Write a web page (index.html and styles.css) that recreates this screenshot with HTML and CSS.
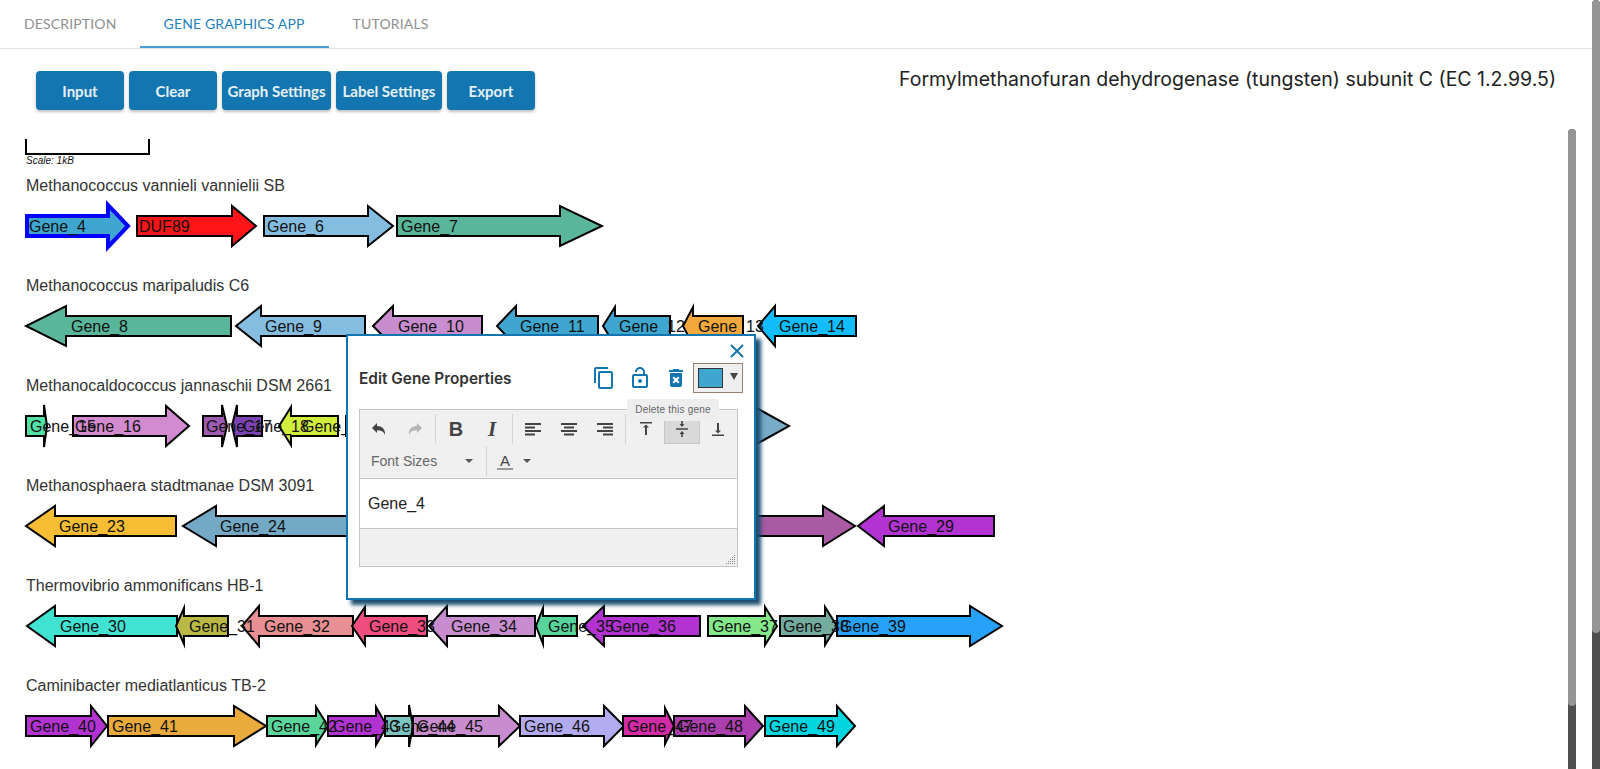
FILE: index.html
```html
<!DOCTYPE html>
<html lang="en">
<head>
<meta charset="utf-8">
<title>Gene Graphics</title>
<link rel="stylesheet" href="styles.css">
</head>
<body>
<nav class="tabs">
  <a class="tab">DESCRIPTION</a>
  <a class="tab tab-active">GENE GRAPHICS APP</a>
  <a class="tab">TUTORIALS</a>
</nav>
<main class="app">
  <div class="toolbar">
    <div class="buttons">
      <button class="btn btn-input">Input</button>
      <button class="btn btn-clear">Clear</button>
      <button class="btn btn-graph">Graph Settings</button>
      <button class="btn btn-label">Label Settings</button>
      <button class="btn btn-export">Export</button>
    </div>
    <h1 class="title">Formylmethanofuran dehydrogenase (tungsten) subunit C (EC 1.2.99.5)</h1>
  </div>
  <svg class="scale" width="200" height="35">
    <path class="scale-line" d="M26 0V15H149V0"/>
    <text class="scale-text" x="26" y="25">Scale: 1kB</text>
  </svg>

  <section class="track">
    <div class="track-label">Methanococcus vannieli vannielii SB</div>
    <svg class="genes" width="1100" height="60">
      <polygon class="gene gene-selected" fill="#3fa7cf" points="27,20 108,20 108,9 128,30 108,51 108,40 27,40"/>
      <polygon class="gene" fill="#ff1418" points="137,20 232,20 232,10 256,30 232,50 232,40 137,40"/>
      <polygon class="gene" fill="#85bde0" points="264,20 368,20 368,10 393,30 368,50 368,40 264,40"/>
      <polygon class="gene" fill="#5ab69a" points="397,20 560,20 560,10 602,30 560,50 560,40 397,40"/>
      <text class="gene-text" x="29" y="36">Gene_4</text>
      <text class="gene-text" x="139" y="36">DUF89</text>
      <text class="gene-text" x="267" y="36">Gene_6</text>
      <text class="gene-text" x="401" y="36">Gene_7</text>
    </svg>
  </section>

  <section class="track">
    <div class="track-label">Methanococcus maripaludis C6</div>
    <svg class="genes" width="1100" height="60">
      <polygon class="gene" fill="#5ab69a" points="231,20 66,20 66,10 26,30 66,50 66,40 231,40"/>
      <polygon class="gene" fill="#85bde0" points="365,20 261,20 261,10 236,30 261,50 261,40 365,40"/>
      <polygon class="gene" fill="#c88dce" points="482,20 393,20 393,10 373,30 393,50 393,40 482,40"/>
      <polygon class="gene" fill="#3fa7cf" points="598,20 516,20 516,10 497,30 516,50 516,40 598,40"/>
      <polygon class="gene" fill="#3fa7cf" points="670,20 615,20 615,11 603,30 615,49 615,40 670,40"/>
      <polygon class="gene" fill="#f5a93c" points="743,20 693,20 693,11 683,30 693,49 693,40 743,40"/>
      <polygon class="gene" fill="#12bdfd" points="856,20 775,20 775,10 758,30 775,50 775,40 856,40"/>
      <text class="gene-text" x="71" y="36">Gene_8</text>
      <text class="gene-text" x="265" y="36">Gene_9</text>
      <text class="gene-text" x="398" y="36">Gene_10</text>
      <text class="gene-text" x="520" y="36">Gene_11</text>
      <text class="gene-text" x="619" y="36">Gene_12</text>
      <text class="gene-text" x="698" y="36">Gene_13</text>
      <text class="gene-text" x="779" y="36">Gene_14</text>
    </svg>
  </section>

  <section class="track">
    <div class="track-label">Methanocaldococcus jannaschii DSM 2661</div>
    <svg class="genes" width="1100" height="60">
      <polygon class="gene gene-narrow" fill="#52e0a5" points="26,20 44,20 44,9 47,30 44,51 44,40 26,40"/>
      <polygon class="gene" fill="#d38bcf" points="73,20 166,20 166,10 189,30 166,50 166,40 73,40"/>
      <polygon class="gene gene-narrow" fill="#9d5cb0" points="203,20 222,20 222,9 227,30 222,51 222,40 203,40"/>
      <polygon class="gene gene-narrow" fill="#7c44b3" points="262,20 237,20 237,9 232,30 237,51 237,40 262,40"/>
      <polygon class="gene" fill="#d2ee3c" points="338,20 291,20 291,11 279,30 291,49 291,40 338,40"/>
      <polygon class="gene" fill="#77abc6" points="346,20 753,20 753,10 789,30 753,50 753,40 346,40"/>
      <text class="gene-text" x="30" y="36">Gene_15</text>
      <text class="gene-text" x="75" y="36">Gene_16</text>
      <text class="gene-text" x="206" y="36">Gene_17</text>
      <text class="gene-text" x="243" y="36">Gene_18</text>
      <text class="gene-text" x="302" y="36">Gene_19</text>
    </svg>
  </section>

  <section class="track">
    <div class="track-label">Methanosphaera stadtmanae DSM 3091</div>
    <svg class="genes" width="1100" height="60">
      <polygon class="gene" fill="#f6bd35" points="176,20 55,20 55,10 26,30 55,50 55,40 176,40"/>
      <polygon class="gene" fill="#74a9c6" points="400,20 216,20 216,10 183,30 216,50 216,40 400,40"/>
      <polygon class="gene" fill="#a95aa3" points="700,20 823,20 823,10 855,30 823,50 823,40 700,40"/>
      <polygon class="gene" fill="#b233d1" points="994,20 884,20 884,10 858,30 884,50 884,40 994,40"/>
      <text class="gene-text" x="59" y="36">Gene_23</text>
      <text class="gene-text" x="220" y="36">Gene_24</text>
      <text class="gene-text" x="888" y="36">Gene_29</text>
    </svg>
  </section>

  <section class="track">
    <div class="track-label">Thermovibrio ammonificans HB-1</div>
    <svg class="genes" width="1100" height="60">
      <polygon class="gene" fill="#40e2d2" points="177,20 55,20 55,10 27,30 55,50 55,40 177,40"/>
      <polygon class="gene" fill="#bbb946" points="228,20 184,20 184,12 176,30 184,48 184,40 228,40"/>
      <polygon class="gene" fill="#e78f93" points="353,20 259,20 259,10 242,30 259,50 259,40 353,40"/>
      <polygon class="gene" fill="#f04d80" points="427,20 365,20 365,11 352,30 365,49 365,40 427,40"/>
      <polygon class="gene" fill="#c88dce" points="535,20 447,20 447,10 429,30 447,50 447,40 535,40"/>
      <polygon class="gene" fill="#57d49c" points="577,20 543,20 543,12 536,30 543,48 543,40 577,40"/>
      <polygon class="gene" fill="#b233d1" points="700,20 604,20 604,10 583,30 604,50 604,40 700,40"/>
      <polygon class="gene" fill="#85e98c" points="708,20 765,20 765,11 777,30 765,49 765,40 708,40"/>
      <polygon class="gene" fill="#74ab9f" points="780,20 825,20 825,11 837,30 825,49 825,40 780,40"/>
      <polygon class="gene" fill="#26a2fa" points="837,20 970,20 970,10 1002,30 970,50 970,40 837,40"/>
      <text class="gene-text" x="60" y="36">Gene_30</text>
      <text class="gene-text" x="189" y="36">Gene_31</text>
      <text class="gene-text" x="264" y="36">Gene_32</text>
      <text class="gene-text" x="369" y="36">Gene_33</text>
      <text class="gene-text" x="451" y="36">Gene_34</text>
      <text class="gene-text" x="548" y="36">Gene_35</text>
      <text class="gene-text" x="610" y="36">Gene_36</text>
      <text class="gene-text" x="712" y="36">Gene_37</text>
      <text class="gene-text" x="783" y="36">Gene_38</text>
      <text class="gene-text" x="840" y="36">Gene_39</text>
    </svg>
  </section>

  <section class="track">
    <div class="track-label">Caminibacter mediatlanticus TB-2</div>
    <svg class="genes" width="1100" height="60">
      <polygon class="gene" fill="#b233d1" points="26,20 91,20 91,10 107,30 91,50 91,40 26,40"/>
      <polygon class="gene" fill="#e9ab3c" points="108,20 234,20 234,10 266,30 234,50 234,40 108,40"/>
      <polygon class="gene" fill="#5bd69b" points="267,20 316,20 316,11 328,30 316,49 316,40 267,40"/>
      <polygon class="gene" fill="#b233d1" points="328,20 376,20 376,11 387,30 376,49 376,40 328,40"/>
      <polygon class="gene gene-narrow" fill="#7bc4c0" points="385,20 409,20 409,9 413,30 409,51 409,40 385,40"/>
      <polygon class="gene" fill="#c88dce" points="413,20 499,20 499,10 520,30 499,50 499,40 413,40"/>
      <polygon class="gene" fill="#b3abf0" points="520,20 604,20 604,10 624,30 604,50 604,40 520,40"/>
      <polygon class="gene" fill="#d12ba5" points="623,20 665,20 665,12 674,30 665,48 665,40 623,40"/>
      <polygon class="gene" fill="#ac3fae" points="674,20 745,20 745,10 763,30 745,50 745,40 674,40"/>
      <polygon class="gene" fill="#00d5e0" points="765,20 837,20 837,10 855,30 837,50 837,40 765,40"/>
      <text class="gene-text" x="30" y="36">Gene_40</text>
      <text class="gene-text" x="112" y="36">Gene_41</text>
      <text class="gene-text" x="271" y="36">Gene_42</text>
      <text class="gene-text" x="333" y="36">Gene_43</text>
      <text class="gene-text" x="389" y="36">Gene_44</text>
      <text class="gene-text" x="417" y="36">Gene_45</text>
      <text class="gene-text" x="524" y="36">Gene_46</text>
      <text class="gene-text" x="627" y="36">Gene_47</text>
      <text class="gene-text" x="677" y="36">Gene_48</text>
      <text class="gene-text" x="769" y="36">Gene_49</text>
    </svg>
  </section>
</main>

<div class="dialog">
  <svg class="dialog-close" width="16" height="16" viewBox="0 0 16 16"><path d="M2 2L14 14M14 2L2 14"/></svg>
  <div class="dialog-head">
    <h2 class="dialog-title">Edit Gene Properties</h2>
    <div class="dialog-icons">
      <svg class="icon" width="24" height="24" viewBox="0 0 24 24"><path d="M16 1H4c-1.1 0-2 .9-2 2v14h2V3h12V1zm3 4H8c-1.1 0-2 .9-2 2v14c0 1.1.9 2 2 2h11c1.1 0 2-.9 2-2V7c0-1.1-.9-2-2-2zm0 16H8V7h11v14z"/></svg>
      <svg class="icon" width="24" height="24" viewBox="0 0 24 24"><path d="M12 17c1.1 0 2-.9 2-2s-.9-2-2-2-2 .9-2 2 .9 2 2 2zm6-9h-1V6c0-2.76-2.24-5-5-5S7 3.24 7 6h1.9c0-1.71 1.39-3.1 3.1-3.1 1.71 0 3.1 1.39 3.1 3.1v2H6c-1.1 0-2 .9-2 2v10c0 1.1.9 2 2 2h12c1.1 0 2-.9 2-2V10c0-1.1-.9-2-2-2zm0 12H6V10h12v10z"/></svg>
      <svg class="icon" width="24" height="24" viewBox="0 0 24 24"><path d="M6 19c0 1.1.9 2 2 2h8c1.1 0 2-.9 2-2V7H6v12zm2.46-7.12l1.41-1.41L12 12.59l2.12-2.12 1.41 1.41L13.41 14l2.12 2.12-1.41 1.41L12 15.41l-2.12 2.12-1.41-1.41L10.59 14l-2.13-2.12zM15.5 4l-1-1h-5l-1 1H5v2h14V4z"/></svg>
    </div>
    <div class="picker">
      <span class="swatch"></span>
      <span class="picker-caret"></span>
    </div>
  </div>
  <div class="editor">
    <div class="editor-bar">
      <div class="bar-row">
        <div class="bar-group">
          <span class="tool"><svg class="glyph" width="16" height="16" viewBox="0 0 16 16"><path d="M1 7L6 2V5C11 5 14.5 8 14 14C12.8 10.6 10 9.2 6 9.2V12Z"/></svg></span>
          <span class="tool tool-off"><svg class="glyph" width="16" height="16" viewBox="0 0 16 16"><path d="M15 7L10 2V5C5 5 1.500 8 2 14C3.200 10.600 6 9.200 10 9.200V12Z"/></svg></span>
        </div>
        <div class="bar-group bar-sep">
          <span class="tool tool-b">B</span>
          <span class="tool tool-i">I</span>
        </div>
        <div class="bar-group bar-sep">
          <span class="tool"><svg class="glyph" width="16" height="14" viewBox="0 0 16 14"><path d="M0 1H16V3H0ZM0 4.500H10V6.500H0ZM0 8H16V10H0ZM0 11.500H10V13.500H0Z"/></svg></span>
          <span class="tool"><svg class="glyph" width="16" height="14" viewBox="0 0 16 14"><path d="M0 1H16V3H0ZM3 4.500H13V6.500H3ZM0 8H16V10H0ZM3 11.500H13V13.500H3Z"/></svg></span>
          <span class="tool"><svg class="glyph" width="16" height="14" viewBox="0 0 16 14"><path d="M0 1H16V3H0ZM6 4.500H16V6.500H6ZM0 8H16V10H0ZM6 11.500H16V13.500H6Z"/></svg></span>
        </div>
        <div class="bar-group bar-sep">
          <span class="tool"><svg class="glyph" width="14" height="14" viewBox="0 0 14 14"><path d="M1 0H13V1.500H1ZM7 2.500L10 5.500H8V13H6V5.500H4Z"/></svg></span>
          <span class="tool tool-on"><svg class="glyph" width="14" height="16" viewBox="0 0 14 16"><path d="M1 7.200H13V8.800H1ZM7 6L4.500 3H6.200V0H7.800V3H9.500ZM7 10L9.500 13H7.800V16H6.200V13H4.500Z"/></svg></span>
          <span class="tool"><svg class="glyph" width="14" height="14" viewBox="0 0 14 14"><path d="M1 12.500H13V14H1ZM7 11.500L4 8.500H6V1H8V8.500H10Z"/></svg></span>
        </div>
      </div>
      <div class="bar-row">
        <div class="font-select">
          <span>Font Sizes</span>
          <span class="caret"></span>
        </div>
        <div class="bar-group bar-sep color-group">
          <span class="color-a">A</span>
          <span class="caret"></span>
        </div>
      </div>
    </div>
    <div class="editor-body">Gene_4</div>
    <div class="editor-status">
      <svg class="grip" width="10" height="10" viewBox="0 0 10 10"><path d="M8 0h1v1H8zM6 2h1v1H6zM8 2h1v1H8zM4 4h1v1H4zM6 4h1v1H6zM8 4h1v1H8zM2 6h1v1H2zM4 6h1v1H4zM6 6h1v1H6zM8 6h1v1H8zM0 8h1v1H0zM2 8h1v1H2zM4 8h1v1H4zM6 8h1v1H6zM8 8h1v1H8z"/></svg>
    </div>
  </div>
  <div class="tooltip">Delete this gene</div>
</div>

<div class="scrollbar scrollbar-inner"><div class="thumb thumb-inner"></div></div>
<div class="scrollbar scrollbar-outer"><div class="thumb thumb-outer"></div></div>
</body>
</html>
```
FILE: styles.css
```css
html, body { margin: 0; padding: 0; height: 769px; overflow: hidden; background: #fff; }
body { position: relative; font-family: "Liberation Sans", Arial, sans-serif; color: #222; }

.tabs { display: flex; box-sizing: border-box; height: 49px; border-bottom: 1px solid #e0e0e0; }
.tab {
  font-family: Lato, sans-serif; font-size: 14px; color: #8f8f8f;
  padding: 0 24px; height: 48px; line-height: 47px; box-sizing: border-box; letter-spacing: 0.15px;
}
.tab:first-child { padding-right: 23px; }
.tab-active { color: #1f7fbc; border-bottom: 2px solid #4a9fd6; }

.toolbar { display: flex; justify-content: space-between; padding: 22px 44px 0 36px; height: 68px; box-sizing: border-box; }
.buttons { display: flex; gap: 5px; }
.btn {
  height: 39px; border: 0; border-radius: 4px; background: #1476b0; color: #e6f0f7; padding: 0;
  font-family: Lato, sans-serif; font-size: 15px; font-weight: 700;
  box-shadow: 0 2px 3px rgba(0, 0, 0, 0.25);
}
.btn-input, .btn-clear, .btn-export { width: 88px; }
.btn-graph { width: 109px; }
.btn-label { width: 106px; }
.title { margin: -4px 0 0; font-family: Inter, sans-serif; font-size: 19.5px; font-weight: 400; line-height: 24px; color: #222; white-space: nowrap; }

.scale { display: block; height: 35px; margin-top: 22px; margin-bottom: 1px; }
.scale-line { fill: none; stroke: #000; stroke-width: 2; }
.scale-text { font-family: "Liberation Sans", sans-serif; font-size: 10px; font-style: italic; fill: #111; }

.track { height: 100px; }
.track-label { padding-left: 26px; height: 21px; line-height: 22px; font-size: 16px; color: #333; }
.genes { display: block; overflow: visible; }
.gene { stroke: #000; stroke-width: 2; stroke-miterlimit: 12; }
.gene-narrow { stroke-miterlimit: 3; }
.gene-selected { stroke: #0000ff; stroke-width: 4; }
.gene-text { font-family: "Liberation Sans", sans-serif; font-size: 16px; fill: #111; }

.dialog {
  position: absolute; left: 346px; top: 334px; width: 410px; height: 266px; box-sizing: border-box;
  background: #fff; border: 2px solid #1476b0; box-shadow: 5px 5px 4px #1d4f70;
}
.dialog-close { position: absolute; left: 381px; top: 7px; }
.dialog-close path { fill: none; stroke: #1476b0; stroke-width: 2; }
.dialog-head { display: flex; align-items: center; height: 30px; margin-top: 27px; padding: 0 11px; }
.dialog-title { margin: 0; font-family: Inter, sans-serif; font-size: 15.4px; font-weight: 600; color: #333; }
.dialog-icons { display: flex; gap: 12px; margin-left: auto; margin-right: 5px; }
.icon { display: block; fill: #1476b0; }
.picker {
  display: flex; align-items: center; gap: 7px; width: 50px; height: 30px; box-sizing: border-box;
  padding-left: 4px; background: #efefef; border: 1px solid #9a7f6b;
}
.swatch { width: 25px; height: 20px; box-sizing: border-box; background: #3fa7cf; border: 1px solid #333; }
.picker-caret { width: 0; height: 0; border-left: 4px solid transparent; border-right: 4px solid transparent; border-top: 7px solid #444; margin-top: -4px; }

.editor { margin: 16px 16px 0 11px; height: 158px; box-sizing: border-box; border: 1px solid #c5c5c5; display: flex; flex-direction: column; }
.editor-bar { background: #f0f0f0; padding: 4px 1px 2px; height: 68px; box-sizing: border-box; display: flex; flex-direction: column; gap: 2px; }
.bar-row { display: flex; height: 30px; }
.bar-group { display: flex; align-items: center; }
.bar-sep { margin-left: 2px; padding-left: 2px; border-left: 1px solid #d4d4d4; }
.tool { display: flex; align-items: center; justify-content: center; flex: none; width: 36px; height: 30px; box-sizing: border-box; }
.glyph { display: block; fill: #444; }
.tool-off .glyph { fill: #b5b5b5; }
.tool-on { background: #d9d9d9; border: 1px solid #c8c8c8; }
.tool-b { font-family: "Liberation Sans", sans-serif; font-weight: 700; font-size: 20px; color: #444; }
.tool-i { font-family: "Liberation Serif", serif; font-style: italic; font-weight: 700; font-size: 21px; color: #444; }
.font-select { display: flex; align-items: center; justify-content: space-between; width: 123px; box-sizing: border-box; padding: 0 11px 0 10px; font-size: 14px; color: #666; }
.caret { width: 0; height: 0; border-left: 4px solid transparent; border-right: 4px solid transparent; border-top: 4px solid #555; }
.color-group { gap: 10px; padding-left: 10px; }
.color-a { font-size: 15px; color: #444; border-bottom: 2px solid #999; line-height: 15px; padding: 0 1px; width: 14px; text-align: center; }
.editor-body { height: 51px; box-sizing: border-box; background: #fff; border-top: 1px solid #c5c5c5; border-bottom: 1px solid #c5c5c5; padding: 0 8px; font-size: 16px; line-height: 49px; color: #222; }
.editor-status { flex: 1; background: #f0f0f0; display: flex; justify-content: flex-end; align-items: flex-end; padding: 0 1px 1px 0; }
.grip { fill: #888; display: block; }

.tooltip {
  position: absolute; left: 279px; top: 63px; width: 92px; height: 22px; line-height: 21px;
  background: #eeeeee; border-radius: 3px; text-align: center; font-size: 10px; letter-spacing: 0.2px; color: #666;
}

.scrollbar { position: absolute; width: 8px; background: #4f4f4f; border-radius: 4px; overflow: hidden; }
.scrollbar-inner { left: 1568px; top: 129px; bottom: -4px; }
.scrollbar-outer { left: 1592px; top: 0; bottom: -4px; }
.thumb { background: #959595; border-radius: 4px; width: 100%; }
.thumb-inner { height: 577px; }
.thumb-outer { height: 633px; }
```
